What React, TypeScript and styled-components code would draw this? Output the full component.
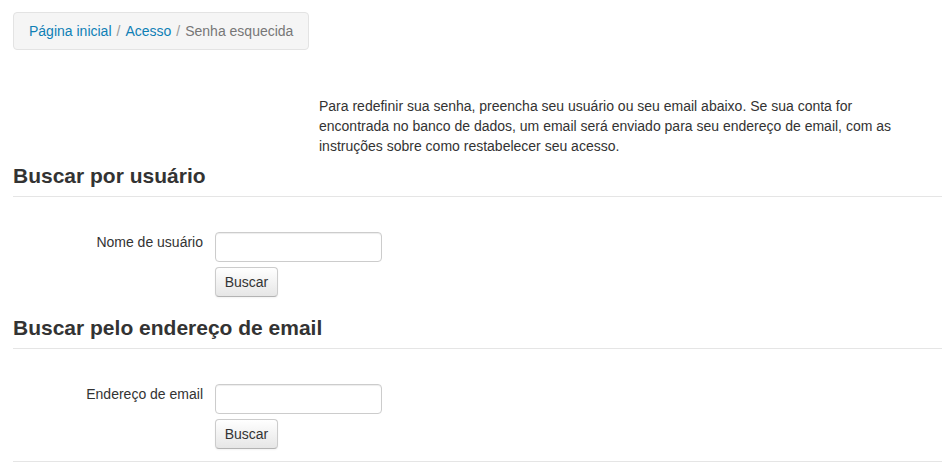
import React from "react";
import styled, { createGlobalStyle } from "styled-components";

const Global = createGlobalStyle`
  html, body { margin: 0; padding: 0; background: #fff; }
  body {
    font-family: "Liberation Sans", Arial, sans-serif;
    font-size: 14px;
    line-height: 20px;
    color: #333;
  }
`;

const Page = styled.div`
  padding: 12px 0 0 13px;
`;

const Breadcrumb = styled.nav`
  display: inline-block;
  padding: 8px 15px 8px 15px;
  background: #f5f5f5;
  border: 1px solid #e3e3e3;
  border-radius: 4px;
  font-size: 14px;
  line-height: 20px;
  color: #777;
`;

const Crumb = styled.a`
  color: #0f80b5;
  text-decoration: none;
`;

const Divider = styled.span`
  color: #999;
  padding: 0 5px;
`;

const Intro = styled.p`
  margin: 46px 0 0 306px;
  max-width: 600px;
`;

const Fieldset = styled.fieldset<{ $gap: number }>`
  margin: 0 0 ${(p) => p.$gap}px 0;
  padding: 0;
  border: 0;
  min-width: 0;
`;

const Legend = styled.legend`
  display: block;
  width: 100%;
  padding: 0;
  margin: 0 0 20px 0;
  font-size: 21px;
  font-weight: bold;
  line-height: 40px;
  color: #333;
  border-bottom: 1px solid #e5e5e5;
`;

const FormRow = styled.div`
  display: grid;
  grid-template-columns: 190px auto;
  column-gap: 12px;
  padding-top: 15px;
`;

const Label = styled.label`
  text-align: right;
  line-height: 20px;
`;

const Controls = styled.div`
  display: flex;
  flex-direction: column;
  align-items: flex-start;
  gap: 5px;
`;

const Input = styled.input`
  box-sizing: border-box;
  width: 167px;
  height: 30px;
  padding: 4px 6px;
  border: 1px solid #ccc;
  border-radius: 4px;
  box-shadow: inset 0 1px 1px rgba(0, 0, 0, 0.075);
  font-family: inherit;
  font-size: 14px;
  background: #fff;
  outline: none;
`;

const Button = styled.button`
  box-sizing: border-box;
  height: 30px;
  width: 63px;
  padding: 0;
  font-family: "Liberation Sans", Arial, sans-serif;
  font-size: 14px;
  color: #333;
  background: linear-gradient(to bottom, #ffffff, #e6e6e6);
  border: 1px solid #ccc;
  border-bottom-color: #b3b3b3;
  border-radius: 4px;
  box-shadow: inset 0 1px 0 rgba(255, 255, 255, 0.2), 0 1px 2px rgba(0, 0, 0, 0.05);
  cursor: pointer;
`;

const Rule = styled.hr`
  margin: 0;
  border: 0;
  border-top: 1px solid #e5e5e5;
`;

export default function App() {
  return (
    <>
      <Global />
      <Page>
        <Breadcrumb>
          <Crumb href="#">Página inicial</Crumb>
          <Divider>/</Divider>
          <Crumb href="#">Acesso</Crumb>
          <Divider>/</Divider>
          <span>Senha esquecida</span>
        </Breadcrumb>
        <Intro>
          Para redefinir sua senha, preencha seu usuário ou seu email abaixo. Se sua conta for
          encontrada no banco de dados, um email será enviado para seu endereço de email, com as
          instruções sobre como restabelecer seu acesso.
        </Intro>
        <Fieldset $gap={11}>
          <Legend>Buscar por usuário</Legend>
          <FormRow>
            <Label htmlFor="username">Nome de usuário</Label>
            <Controls>
              <Input id="username" type="text" />
              <Button type="button">Buscar</Button>
            </Controls>
          </FormRow>
        </Fieldset>
        <Fieldset $gap={12}>
          <Legend>Buscar pelo endereço de email</Legend>
          <FormRow>
            <Label htmlFor="email">Endereço de email</Label>
            <Controls>
              <Input id="email" type="text" />
              <Button type="button">Buscar</Button>
            </Controls>
          </FormRow>
        </Fieldset>
        <Rule />
      </Page>
    </>
  );
}
